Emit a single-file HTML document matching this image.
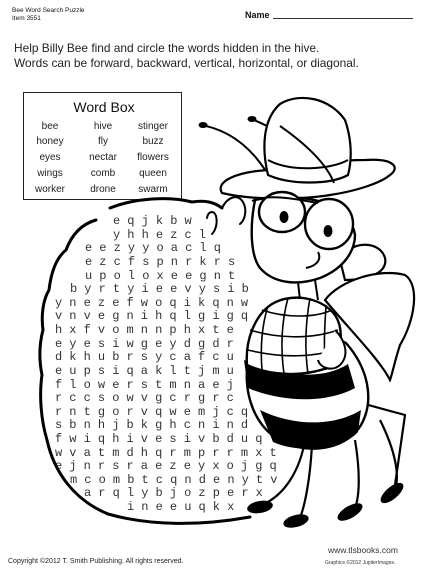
<!DOCTYPE html>
<html><head><meta charset="utf-8"><style>
html,body{margin:0;padding:0;background:#fff;}
body{width:421px;height:575px;position:relative;overflow:hidden;font-family:"Liberation Sans",sans-serif;color:#111;}
.a{position:absolute;white-space:nowrap;}
.g{position:absolute;font-family:"Liberation Mono",monospace;font-size:12px;letter-spacing:7.1px;line-height:12px;color:#333;}
.w{position:absolute;font-size:10px;transform:translateX(-50%);color:#222;}
</style></head><body>
<div class="a" style="left:12px;top:7px;font-size:6.5px;line-height:8px;">Bee Word Search Puzzle<br>Item 3551</div>
<div class="a" style="left:245px;top:10px;font-size:9px;font-weight:bold;">Name</div>
<div class="a" style="left:273px;top:18px;width:140px;border-top:1px solid #333;"></div>
<div class="a" style="left:14px;top:41px;font-size:11.9px;line-height:15px;color:#222;">Help Billy Bee find and circle the words hidden in the hive.<br>Words can be forward, backward, vertical, horizontal, or diagonal.</div>
<div class="a" style="left:23px;top:92px;width:157px;height:106px;border:1.5px solid #222;"></div>
<div class="a" style="left:104px;top:99px;font-size:14px;transform:translateX(-50%);">Word Box</div>
<div class="w" style="left:50px;top:121px">bee</div><div class="w" style="left:103px;top:121px">hive</div><div class="w" style="left:153px;top:121px">stinger</div>
<div class="w" style="left:50px;top:136px">honey</div><div class="w" style="left:103px;top:136px">fly</div><div class="w" style="left:153px;top:136px">buzz</div>
<div class="w" style="left:50px;top:152px">eyes</div><div class="w" style="left:103px;top:152px">nectar</div><div class="w" style="left:153px;top:152px">flowers</div>
<div class="w" style="left:50px;top:168px">wings</div><div class="w" style="left:103px;top:168px">comb</div><div class="w" style="left:153px;top:168px">queen</div>
<div class="w" style="left:50px;top:184px">worker</div><div class="w" style="left:103px;top:184px">drone</div><div class="w" style="left:153px;top:184px">swarm</div>

<div class="g" style="left:113px;top:215px">eqjkbw</div>
<div class="g" style="left:113px;top:229px">yhhezcl</div>
<div class="g" style="left:85px;top:242px">eezyyoaclq</div>
<div class="g" style="left:85px;top:256px">ezcfspnrkrs</div>
<div class="g" style="left:85px;top:270px">upoloxeegnt</div>
<div class="g" style="left:70px;top:283px">byrtyieevysib</div>
<div class="g" style="left:55px;top:297px">ynezefwoqikqnw</div>
<div class="g" style="left:55px;top:310px">vnvegnihqlgigq</div>
<div class="g" style="left:55px;top:324px">hxfvomnnphxte</div>
<div class="g" style="left:55px;top:338px">eyesiwgeydgdr</div>
<div class="g" style="left:55px;top:351px">dkhubrsycafcu</div>
<div class="g" style="left:55px;top:365px">eupsiqakltjmu</div>
<div class="g" style="left:55px;top:379px">flowerstmnaej</div>
<div class="g" style="left:55px;top:392px">rccsowvgcrgrc</div>
<div class="g" style="left:55px;top:406px">rntgorvqwemjcq</div>
<div class="g" style="left:55px;top:419px">sbnhjbkghcnind</div>
<div class="g" style="left:55px;top:433px">fwiqhivesivbduq</div>
<div class="g" style="left:55px;top:447px">wvatmdhqrmprrmxt</div>
<div class="g" style="left:55px;top:460px">ejnrsraezeyxojgq</div>
<div class="g" style="left:70px;top:474px">mcombtcqndenytv</div>
<div class="g" style="left:84px;top:487px">arqlybjozperx</div>
<div class="g" style="left:127px;top:501px">ineeuqkx</div>

<svg class="a" style="left:0;top:0" width="421" height="575" viewBox="0 0 421 575">
<g fill="none" stroke="#000" stroke-linecap="round" stroke-linejoin="round">
<path d="M110,208 C135,198 170,196 192,202 C205,200 214,202 222,208 M96,220 C82,224 72,234 66,250 C56,258 51,273 49,290 C43,300 41,315 43,330 C39,345 39,360 42,375 C39,395 41,420 47,440 C54,472 74,500 108,514 C150,526 200,526 250,517" stroke-width="3"/>
<path d="M222,208 C228,196 238,194 243,202 C248,211 244,221 240,224" stroke-width="2"/>
<path d="M207,218 C208,211 214,210 216,216 C218,224 215,231 212,234" stroke-width="2"/>
<path d="M201,125 C230,130 258,150 276,190" stroke-width="2"/>
<path d="M249,118 C280,130 310,150 333,183" stroke-width="2"/>
<ellipse cx="203" cy="125" rx="4" ry="2.5" fill="#000"/>
<ellipse cx="252" cy="119" rx="4" ry="2.5" fill="#000"/>
</g>
<g stroke="#000" stroke-width="2.2" fill="#fff">
<path d="M222,193 C215,182 235,172 268,170 C300,166 330,160 365,160 C395,158 400,168 390,175 C378,185 350,192 330,195 C300,200 250,200 222,193 Z"/>
<path d="M268,175 C262,150 262,120 280,104 C300,92 330,98 345,120 C352,140 352,160 348,175 C330,185 290,185 268,175 Z"/>
</g>
<path d="M268,160 C290,172 330,170 348,160 M280,126 C300,140 325,160 334,183" fill="none" stroke="#000" stroke-width="2"/>
<g stroke="#000" stroke-width="2.2" fill="#fff">
<path d="M340,260 C350,240 380,240 385,258 C388,272 370,280 345,280 Z"/>
<path d="M325,300 C340,280 380,268 405,275 C420,285 415,320 400,345 C395,360 392,375 390,380 C380,360 350,330 325,300 Z"/>
</g>
<g stroke="#000" stroke-width="2.4" fill="#fff">
<path d="M255,200 C250,225 250,255 260,268 C275,285 300,285 320,278 C345,268 355,250 355,235 C352,215 330,200 300,198 C280,197 262,198 255,200 Z"/>
<ellipse cx="282" cy="212" rx="23" ry="20"/>
<ellipse cx="329" cy="224" rx="24" ry="25"/>
</g>
<ellipse cx="284" cy="217" rx="4.5" ry="6"/>
<ellipse cx="328" cy="231" rx="4.5" ry="6"/>
<path d="M252,201 C270,193 300,200 318,203" fill="none" stroke="#000" stroke-width="2"/>
<path d="M318,252 C322,260 316,266 306,268" fill="none" stroke="#000" stroke-width="2"/>
<path d="M298,282 L300,300 M315,280 L318,300" stroke="#000" stroke-width="2"/>
<g stroke="#000" stroke-width="2.2" fill="none">
<path d="M305,440 C300,470 285,495 262,505"/>
<path d="M312,445 C310,480 305,505 300,518"/>
<path d="M355,440 C360,470 360,495 355,508"/>
<path d="M380,420 C395,450 400,475 395,490"/>
<path d="M350,400 L405,415 L395,485"/>
</g>
<ellipse cx="260" cy="507" rx="13" ry="6" transform="rotate(-10 260 507)"/>
<ellipse cx="296" cy="521" rx="13" ry="6" transform="rotate(-15 296 521)"/>
<ellipse cx="350" cy="512" rx="14" ry="6" transform="rotate(-30 350 512)"/>
<ellipse cx="392" cy="493" rx="14" ry="6" transform="rotate(-40 392 493)"/>
<path d="M248,360 C243,392 253,428 285,443 C315,455 348,447 361,425 C375,400 368,368 346,343 C320,328 263,333 248,360 Z" fill="#fff" stroke="#000" stroke-width="2.4"/>
<path d="M244,360 C280,376 322,381 348,364 L355,388 C326,404 280,402 248,388 Z"/>
<path d="M260,410 C290,425 332,428 361,410 L358,432 C342,450 300,454 273,442 Z"/>
<path d="M247,365 C245,340 255,315 272,304 C290,293 320,296 335,315 C345,330 340,350 335,365 C305,378 270,376 247,365 Z" fill="#fff" stroke="#000" stroke-width="2.4"/>
<g fill="none" stroke="#000" stroke-width="1.6">
<path d="M250,330 C275,338 310,340 338,330 M248,350 C280,358 315,358 340,348 M262,310 C285,318 315,318 332,310"/>
<path d="M268,306 C262,325 260,345 262,370 M288,298 C282,320 280,345 284,374 M310,298 C306,320 304,345 308,374 M326,305 C325,325 323,345 326,370"/>
</g>
<path d="M335,330 C345,340 350,355 340,365 C332,372 320,368 318,360" fill="#fff" stroke="#000" stroke-width="2"/>
</svg>

<div class="a" style="left:8px;top:558px;font-size:7px;color:#222;">Copyright ©2012 T. Smith Publishing. All rights reserved.</div>
<div class="a" style="left:328px;top:545px;font-size:8.5px;color:#333;">www.tlsbooks.com</div>
<div class="a" style="left:325px;top:560px;font-size:5px;color:#333;">Graphics ©2012 JupiterImages.</div>
</body></html>
